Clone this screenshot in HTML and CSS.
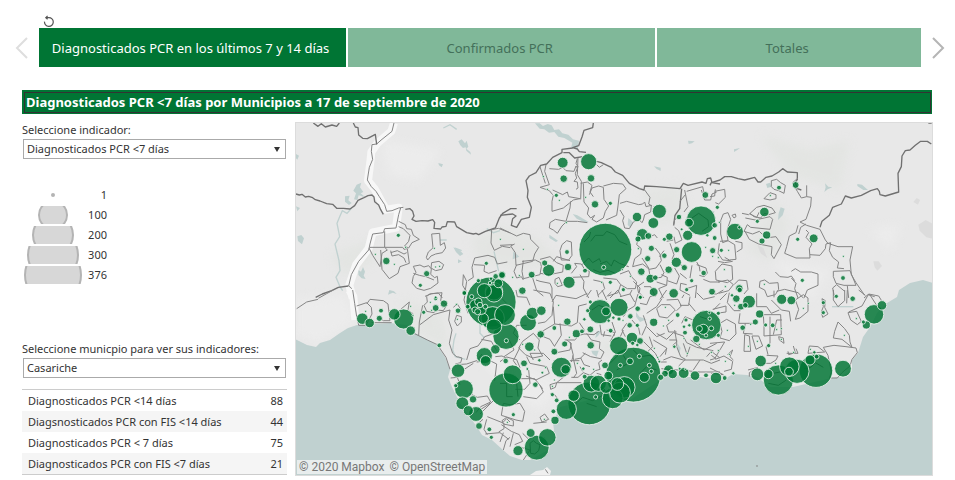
FILE: index.html
```html
<!DOCTYPE html>
<html lang="es">
<head>
<meta charset="utf-8">
<meta name="viewport" content="width=device-width, initial-scale=1">
<title>Diagnosticados PCR por Municipios</title>
<link rel="stylesheet" href="styles.css">
</head>
<body>
<header class="story">
  <button class="reset" type="button" aria-label="Restablecer">
    <svg viewBox="0 0 12 12" width="12" height="12"><path d="M3.500 2.600H5.800A4.400 4.400 0 1 1 1.500 6.600M4.600 .8 2.800 2.600 4.600 4.200"/></svg>
  </button>
  <nav class="story-nav">
    <button class="arrow arrow-prev" type="button" aria-label="Anterior">
      <svg viewBox="0 0 13 22" width="13" height="22"><path d="M12 1 2 11l10 10"/></svg>
    </button>
    <div class="tabs">
      <button class="tab tab-active" type="button">Diagnosticados PCR en los últimos 7 y 14 días</button>
      <button class="tab" type="button">Confirmados PCR</button>
      <button class="tab tab-last" type="button">Totales</button>
    </div>
    <button class="arrow" type="button" aria-label="Siguiente">
      <svg viewBox="0 0 13 22" width="13" height="22"><path d="m1 1 10 10L1 21"/></svg>
    </button>
  </nav>
</header>
<main class="board">
  <div class="title"><h1>Diagnosticados PCR &lt;7 días por Municipios a 17 de septiembre de 2020</h1></div>
  <div class="content">
    <aside class="panel">
      <div class="top">
        <label for="indicador">Seleccione indicador:</label>
        <div class="pick"><select id="indicador"><option>Diagnosticados PCR &lt;7 días</option></select></div>
        <ul class="legend">
          <li><svg viewBox="-29 -9 58 18"><circle r="2" class="dot"/></svg><span>1</span></li>
          <li><svg viewBox="-29 -9 58 18"><circle r="14"/></svg><span>100</span></li>
          <li><svg viewBox="-29 -9 58 18"><circle r="20"/></svg><span>200</span></li>
          <li><svg viewBox="-29 -9 58 18"><circle r="25"/></svg><span>300</span></li>
          <li><svg viewBox="-29 -9 58 18"><circle r="28"/></svg><span>376</span></li>
        </ul>
      </div>
      <div class="bottom">
        <label for="municipio">Seleccione municpio para ver sus indicadores:</label>
        <div class="pick"><select id="municipio"><option>Casariche</option></select></div>
        <table class="data">
          <tbody>
            <tr><th scope="row">Diagnosticados PCR &lt;14 días</th><td>88</td></tr>
            <tr><th scope="row">Diagsnosticados PCR con FIS &lt;14 días</th><td>44</td></tr>
            <tr><th scope="row">Diagnosticados PCR &lt; 7 días</th><td>75</td></tr>
            <tr><th scope="row">Diagnosticados PCR con FIS &lt;7 días</th><td>21</td></tr>
          </tbody>
        </table>
      </div>
    </aside>
    <section class="map">
      <svg viewBox="295 122 638 354" role="img" aria-label="Mapa de municipios">
        <rect class="land" x="295" y="122" width="638" height="354"/>
        <g class="relief">
          <path d="M470 240 500 225 540 240 560 262 520 270 480 262ZM640 190 680 185 690 215 660 225ZM745 250 775 200 790 225 770 262ZM400 300 440 310 450 350 420 335ZM590 345 640 330 660 350 620 360ZM760 135 810 150 850 140 840 190 790 175ZM330 255 370 240 375 262 345 275ZM660 330 700 340 720 365 680 360Z"/>
          <path class="relief-light" d="M296 300 345 295 356 322 318 344 296 336ZM520 365 560 385 540 410 515 395ZM480 360 505 355 500 380ZM380 140 440 150 420 180 390 175ZM870 230 900 225 890 250ZM770 260 830 270 810 300Z"/>
        </g>
        <path class="sea" d="M295 339 307 345 316 347 320 343 330 340 340 333 348 328 357 325 390 323 407 325 415 333 437 345 445 357 450 370 448 377 452 387 460 403 467 413 477 427 482 435 492 440 503 450 510 456 522 460 530 460 548 450 555 437 553 423 560 407 577 403 600 397 630 400 660 380 667 372 687 377 700 377 723 380 733 374 747 375 757 377 770 387 793 387 810 383 832 378 840 377 852 370 852 360 858 353 863 337 870 327 877 313 887 303 897 297 899 290 910 283 923 280 933 283V476H295Z"/>
        <path class="relief-light" d="M530 475 536 471 543 470 547 467 551 471 550 475Z"/>
        <g transform="translate(290 118) scale(.333333)">
          <path class="water" d="m505 70 10-6 10 12 5-8 5 18-6 6 12 10 2 8-14-12-2-10-8 2-8-8ZM200 200l14-6-4 14 10 14-8 4 14 12-20-6-4 14-10-2 6-18-8-8ZM165 235l14-2-4 14 10 8-8 6-12-10ZM205 455l8 6 6-14 6 14-4 12 6 10-12-2-10-10ZM22 355l12-4 8 10-6 18-12-10ZM18 108l9 5-5 12-4-4ZM18 265l12 5-8 10ZM490 388l16 6 14 14-10 6-12-12ZM504 424l12 6-12 6ZM445 135l14 4-4 9-8-6Z"/>
          <path class="river" d="m185 270-14 16-14-8-8 18-8 20 8 40-14 22 12 50 3 30-12 20 12 28 8 12M460 30l20-10 20 14M450 366h20M590 332l20 12 20-6M612 400l14 60M495 390l20 8"/>
          <path class="halo" d="m312 15-8 25-42 36-18 26-2 22-8 64 20 25 34 62 38-6-8 60-70 14-12 48-38 50-20 60 10 40"/>
          <path class="line" d="m312 15-6 25-30 24-16 14-14 2-2 20 4 24-10 24-6 38 12 20 14 14 10 16 16 24 6 20 16-2 20-8 14-2M332 270l-6 20-8 40-34 2-4 12-32 4-8 30-4 18-30 34-22 40-8 34 8 6 6 30"/>
          <path class="line dark" d="m70 15 14 10 10-8 12 10 20-6 14 4 8-10M190 15l6 12 8 2 2 22 12 10 14 1 24-13 4 30M18 228l10 3 8-2 10 8 10-2 12 4 8 6 14 4 20 8 18 2 12 12 20 0 20 2 14-10 10-16 18-8 12-6 12-2 6 6 2 14 12 10 6 14 8 14M346 274l14-2 8 8 4 14-6 10 12 6 18-2 18 1 14-4 6 8-2 18 20 2 4-6 12-2 4-14 22 1 6 14 30 18 20 4 8-2 8 4 20-10 30-10 12-30 10-14 24-14h18M175 504l-30 4-20 10-28 10-20 10"/>
          <path class="line" d="m326 310 20 10 4 12 14 2 6 18 18 12-22 10-10 16-12-6 12-14 4-18-20-20-14-6M284 340v48h54l4 6 10-2 6 44-28 10-6 20-26 16-22-28-4-58M240 388h44l8 8-16 10-6 40-22-34-10-20ZM302 404l20-6 20 10 8-4M302 398l4 16 20-4 16 10 6 14M425 348l24-2 2 36 12-8 4 16-10 14-20 4-14 6-10 12-4-8 6-16 14-12ZM370 445l20-4 12 6 14-4 8 10-2 16 12 10 8-4 2 20-22 16-20 6-22-6-14-16 4-20 8-12ZM370 466l18 6 20 4 24 10M425 434l22-4 14 10-6 14-18 4-14-8ZM605 335l20-4 36 14M605 335l-2 40 10 22 24-12 24 4M546 448l8-28 40-8 20 6 8 20 30-6M546 448l4 30-16 10M552 440l32 2-2 18 14 6 24-8M520 470l10 20-4 26-8-14ZM405 535l20-8 20-2 12 15"/>
        </g>
        <g transform="translate(500 118) scale(.333333)">
          <path class="water" d="m105 16 14 0 10 8 14-6 12 4 8 14 14-2 10 12 18 4 14 14 18 4-4 26-20-4 4-16-24-14-18-4-12-14-16 2-14-10-14-2ZM564 68l20 2-8 6-10 2ZM462 145l20 4v10l-12-6ZM218 288l14 4 34 20-10 2-26-12ZM385 300l14 12-8 18-8-10ZM148 350l26 18-6 4-20-12ZM40 400l18 16-20 8Z"/>
          <path class="line dark" d="m280 15-2 14-26 8-6 20-10 26-18 6 14 4 6 8 20 2M218 90l-32 4v10l-28 14-18 20-18 4-14 22-20 10-10 14 6 30-2 20 12 30-6 30-24 6-14 24-16-6 4-20 10-8-10-6-38 4M190 104l18 0 16 16 24-4M290 130l14 4 30 14 12 14 22 10 20 24 30 16 14 4 2-12 36 2 70 6 10-16 14 6 42-10 12 4 4-14 10-2 4 14 24 4M545 212l-6 60-14 20-4 30"/>
          <path class="line" d="m138 140-4 20 14 40-28 8 28 10 10 12M148 152l28 2 12-6 10 10 24 2 6-16 4 6M120 146l16 50M232 122l-4 14 6 10-8 20 4 14-8 10 10 2 2 18-6 4M234 120l-2 50 12 20-2 54M158 216l30 14 14-8 4 14 34 6-20 4-30 24-34 10v-30l4-18M212 250l-2 20-12 40-32-6-16 10-2 16 12 6 12 10 14-22 14-14h32l30 4M242 196l20-4 14 10-6 20 10 14M290 140l8 8 12-8M250 196l2 56 14 18-4 18 10 12 12-8-8 12 14 8 20-12 6-20 10-16-14-20-2-36-14-4-20 6-8 20M310 204l30-8 28 2 10 14-20 18-4 34-4 28-32 14M360 256l20-6 36 10 12-2 6-6 4 14 16-4-2 20-18 8-4 16-4 8-8-8-18 6-12 20-14-2-6-22 4-12-12-20M434 216l16 22-4 20 10 6M0 330l50 24 20-8 20 4 2 14 24 24-12 20-6 22-50 12-2-38-14-20 12-6M0 382l38-2M66 430l40-4 16 8 2 12-4 24-50 12-4-22 4-32M50 440l-8 20 8 20 14-4 6 10M120 424l30-8 20 18 20 8-2 20-40 8-28-4M160 430l10-14 40 12M186 380l14-12 14 4 2 40-10 14-22 0-4-28ZM165 484l12-6 10 24-14 4-8-10ZM108 486l12 4 30 6 6 14 0 30M98 480l12 38 20 16M240 470l12 20-2 20 16 30M214 466l16-20-6-10 20 2 10 16 14 6-2 16-50 2M280 486l28 6 6 20-20 20M310 480l40 4 12 16-8 24-30 10M360 468l26-10 10 20 14 14-4 20-24 0-20-12M398 446l6-24 18-14 2-16-14-12 6-24M426 420l20 30 4 24M398 446l30-8 20 16 20-4 16-22-4-20-14-18M432 492l-20 14 4 20M480 440l12 24-8 14-34 4M492 398l-14 18M400 490l20 20-2 14 14 16M470 492l30 10 2-24-18-8M500 502l-24 10 14 28M524 450l14 24-8 24-28-10M540 466l20 16M560 500l-18-4-2 20 30 16M542 440l18 12M576 442l-6 38M600 460l-2-14-8-14M590 440l28 10 4 16-10 10-14-4M520 322l4-16 10-10M524 328l12 10 10 28-20 10-4-20M500 370l20-4M472 360l-8-10-14 6M554 216l10 50-12 16M560 220l48-14 4 20M604 216l10 30 18 0 4-18 14-6M540 250l16-20M510 376l12 34-6 14M432 506l20 0 14 30M552 530l-6 10M560 512l30-10-4 38M610 484l20 8 30 0"/>
          <path class="line under" d="M252 372l16-16 4-14M272 370l14-18 24 0 10-12 24 10 14 20 24 10M246 440l20-20 12 14 20-12 4 10M300 438l20-8 14 14 8-18 16 10 28 10M280 455l20 8 24-6 20 8M576 300l20-14 28 20 2 20-20 14"/>
        </g>
        <g transform="translate(710 118) scale(.333333)">
          <path class="water" d="m72 94 18-4-8 6-10 6ZM168 198l12-4 4 12-12 4ZM345 196l10 10 12 2-14 6-10 8 4-14ZM442 198l14 2 18 16-14 0-18-12ZM212 268l12 4-6 20-14 14 2-20ZM0 280l14 0-6 10ZM172 490l28-8"/>
          <path class="urban" d="m625 320 22-14 22 12v44l-20-4-20-20ZM490 430l16 0 10 14-14 14-8-10ZM620 240l10 6-6 14-14-8ZM142 380l18 10 12 30-20-14Z"/>
          <path class="line dark" d="M0 202l4-8 26-8 14-10 20 0 20 6 20 4 30-8 10 14 8 0 16-14 18-4 20-12 12-10 14 10 30 2v20l-6 10 6 18 12 4M330 328l6-18 22-18 10-24 26-10 12-24 18 6 30-8 28-14 20-6 6 8 2 10 16 4 20-6 20-6-2-56 10-20 2-32 10-16 14-2 16-14 16-12 20 0 12 8M655 15h10"/>
          <path class="line" d="m290 202v34l14 2-2 26-14 40-18 8 20 10 40 12 16 32 8 10 30 10 44 0-8 40 4 44 14 24 26 38M248 194l16-14M248 196l14 24 12 20 16-4M184 188l16-4 12 10 14 8-4 24-16-8-14-4-8-8ZM162 242l18-18 18 6v12l-18 4ZM288 318l-16 10-6 20M264 322l-6 22-20 10-8 32-6 20 34 14 42 0-2-28 8-14-18-20 8-14-8-8M300 410l30 2 16-20 2-14 14-4-4 24 10 20 18 14-4 18 20 2M370 460l50-2 18 44-36 0-24-6-8-20ZM374 540l-6-30 12-10 24 20M412 504l4 36M462 540l12-10 20 6M244 460l12-8 16 10 32 0 20 6v34l-32 14-10 24M244 480l14 16-4 16 10 28M106 300l30 6 44-10 8 8-8 30-58-6-10-8-10 20 26 8 20-8 20 20 30-4 16 24-22 42-8-12 2-24-40-8-28-14-12-22M96 286l20 4 24-22 22-6 24 8 10 14-20 6-12-4-12 14-20-4-12-10M120 288l20 10 8-16M14 220l30-6 2 24-20 20-10-4M0 236l14-2 2-20M40 288l14-4 8 20-12 36 4 28-16 6-6-26 0-40ZM30 370l24-2 20 12 4 44-20 2-14-8M76 370l20 4 0 18-16 10M28 376l-4 30 14 20 24 2M24 430l20 4 24-4M16 460l20-22 30 6 2 40-16 10-34-8ZM24 492l30-6 16 14-14 18-30 8M66 292l10-4 2 8-6 4ZM72 500l14-14 24 2 4 26-12 14M150 490l14-4 14 10 26-2 2 20-10 16-24 6-8-20-16-8ZM196 462l14 14 24 2 10-4 10 14M200 520l24-6 40 10 16 16"/>
        </g>
        <g transform="translate(290 290) scale(.333333)">
          <path class="water" d="M298 0l14 4 8 8-12-4-14 6Z"/>
          <path class="river" d="m498 130-6 20-4 30 8 20 30 8M570 90v40l14 14"/>
          <path class="halo" d="m178 0 12 20 6 70"/>
          <path class="line" d="m188 0 6 40 6 40M85 25l25-14 20-11M20 56l30-20 34-8"/>
          <path class="line" d="m200 48 30-10 14 14 2 20-18 34-22 0-6-30M230 42l10-14 40 4 14 10 6 50-20 0-14-10M245 98l60 0M330 60l28-24-4 24 14 10 2 20M386 136l2-40 10-50M390 104l40-30 50-14-4 30 10 30-8 40 10 30 14 12M410 20l8-8 38-4-4 24 18 14-10 16-20-2-8 8-22-4-8-18 10-10ZM500 76l14 4 0 16-12 12-8-14ZM490 52l12-10 10 16M372 130l40 20 30 14 26 38 12 36M528 0l-6 30 12 40M482 264l20-2 8 22M502 200l14 4-4 14-16 4M500 224l30-2 30-10 16-20M530 210l10-34 24-8 20-28 30-10M560 216l40-4 20 10-6 50M616 200l20-2 16 8M520 240l30-20M538 310l24 12 30-4 10 18-30 14-14 18M600 340l-30 20M570 372l40-40M565 400l14-12M592 380l50 20 0 16-16 10M590 388l-8 30 10 16M586 432l44-4 26 20M640 480l8-28 12-10M574 148l30 6 16 28M640 396l10-10 10 10"/>
        </g>
        <g transform="translate(500 290) scale(.333333)">
          <path class="water" d="m290 124 14-2-10 16-8 6ZM274 182l22 0-6 18-12-8ZM408 66l10 14 22 8-20 8-12-16ZM532 160l10 14-4 16-6-12Z"/>
          <path class="line" d="m48 0 4 20 28 2 10 24M100 0l50 10 10 26-4 40-20 20-22 4M156 36l12-20 60 10 34-16M160 50l4 52-34 20-10 24M164 102l50 6 18-10 4-50 24-6M238 98l16 24M180 100l4 36-20 32M130 140l20 8 14 22M100 130l18 20-4 24 14 24-30 6-22-10-20-20 12-20ZM60 150l-20-20 10-24 30 0M80 200l10 20 50 10 8 20-40 20-30-12M100 210l-10-20 40 0 20 20M86 240l4 40-16 18-28 0M120 286l10 20-20 20-40-6M60 266l44 0 24 30M0 215l20-14 30 8 10 24M28 150l14 30-30 20M60 172l-20 40 10 14M194 150l30 0 14-14 14-4 30 2 14-10M200 150l14 10-4 20-50 10M210 156l10 40-6 20M260 130l14 20 26 6-2 20 14 10-10 20-30-6-24-12M270 230l-18-6-10-20 14-14M244 204l-20 4M218 196l12 54-10 14M214 262l20 0 16-14 20 8 16-14 14-4-4-20 10-8M190 262l-20 16 40 0 34 0M150 284l20-6-4 14-14 6ZM150 310l14 4 10 14M120 382l14-10 12 16-20 8ZM10 340l20 4 30-4 14 24-6 30-20-4-44-14ZM6 392l14-10 20 10 0 16-30-6ZM4 404l30 20 24 10 10 20-24 10M0 456l10-28M30 470l10-40M56 470l34 10-20 30M88 450l-20-20M160 370l14-12M100 400l40-4"/>
          <path class="line" d="m260 20 14-20M320 30l-14-30M330 24l24-24 10 20M336 96l10 30-16 30M300 104l4 30 30 4M310 140l4-16M370 80l14-20 20-12 10-36M380 100l-14 20 10 20M340 150l20-8 10-22M396 90l20 24 4 20M420 40l20 4 10-24 20-4M430 76l10 30-14 30M440 70l30-20 16-24M470 56l14-12 26 0 16 16-24 24-24-4ZM480 28l20-28M500 30l34-2 10 20-14 14M540 46l26 0 4-26M566 40l20 24M520 90l-20 16 6 20 24 0M440 110l30 30 24-10M448 140l10 30-20 20M426 150l40 40 14 26 20 0M460 150l40 24-4 20M470 130l30 18 20-20 30 10 10 20 30 14 50 10M508 150l22 0 0 20 12 30 14 8-20 20M490 210l24-10 36 10 60 0M524 120l6 36-12 10M550 160l10 30M560 200l10-30M572 150l40 30 38-20M620 200l14-16 26 20M634 196l14 10M610 210l24 10 26-10M484 236l50 4 66 6 60 0M480 200l20-24M580 240l20-30M290 250l14 4M320 120l24 8-2 10M210 212l28 0M240 230l8 14M590 8l20 20 34-8M640 60l20-20M545 100l10-20 24 10"/>
          <path class="line under" d="M330 220l20-20 14-20M350 240l34-20-14-24M400 180l20 20 30-4 14 10M420 250l20-20 30 10M0 280h20v40l18 0M30 270l20 10 4 40M228 340l20-18 30 10 30-16M260 340l30 10M276 60l20-14 24 8M90 460l10-8 10 8 10 4-4 18-12 10-12-2ZM600 80l30 10"/>
          <path class="line" d="m136 538 8 12M0 20l20 20M290 0l6 22M320 20l14-14M360 20l30-8 14 24M390 12l6-12"/>
        </g>
        <g transform="translate(710 290) scale(.333333)">
          <path class="river" d="M366 50h64"/>
          <path class="line" d="m0 12 20 0 20-12M30 100l20-12 26 14 2 30-20 20-28-8 6-20ZM18 70l30-4 0-18-40 10M58 8l-6 30 20 24 20 0M90 70l-4 30 44 0M106 100l-6 30 28 2M104 134l-2 50 20 0-4-46ZM126 138l20 0 12 30-20 10ZM140 10l0 40 30 0 14 20 24-10M160 74l52 0 2 60-52 4 0-30ZM180 80l0 60 0 20-12 10 6 24M190 134l10-44 16 0M206 140l14 4 2 16-14-10ZM192 2l0 20M184 30l30 30 24 4 4 30M256 30l24-16 14 10 0 40-24 20-14 4 10-30ZM336 26l10 6-2 20 10 20-16 10-4-16 6-16ZM370 0l0 30 14 20 20-18 0-32M412 0l-2 40M384 96l20 20 14 20 2 20 6 16-30-24-26-4 4-20ZM414 68l26-4 14 30-12 10-20-14ZM416 66l40-18 20-36 30 6 10 16M478 12l26 40M446 0l20 16M340 172l32-6 36 4 30 4 4 14-16 20-6 20-24 20-14 16-20 0M340 172l14 24 10 50-6 20M298 168l-4 22 50-4-20-16ZM250 168l6 20-20 6-2-10M230 190l34 0-6-14M170 196l34 2-6 12-16 10-22 0M114 240l30-8-26 16 0 12M0 160l44-4-30 50-14 4M16 208l26-10 26 16-4 24-22 6M52 194l16-14-8 20 10 10M0 234l40 20-36-4M30 30l20-20"/>
          <path class="line under" d="M282 236l20-4 14-14 24 14M175 280l30 6 24-16M190 250l20-4"/>
          <path class="line" d="M138 528h6"/>
        </g>
        <g id="cases" class="cases"></g>
        <rect class="frame" x="295.500" y="122.500" width="637" height="353"/>
      </svg>
      <p class="credits"><a href="#mapbox">© 2020 Mapbox</a><a href="#osm">© OpenStreetMap</a></p>
    </section>
  </div>
</main>
<script src="map.js"></script>
</body>
</html>
```
FILE: map.js
```js
// Case circles, grouped by map tile. Tile units are a third of a map unit: x, y, radius.
const tiles = [
  [290, 118, "325,352,5 347,388,2 256,409,2 289,429,10 313,439,2 433,391,2 631,364,2 589,436,5 410,467,8 449,445,2 437,447,2 391,502,5 523,525,6 437,538,3 603,552,74 636,471,10 625,496,12 617,475,7 583,518,20 603,482,4 565,488,5 600,495,4 612,520,25"],
  [500, 118, "188,134,15 266,131,23 191,182,10 273,181,10 130,176,2 142,214,2 169,232,5 178,247,2 257,238,2 285,259,10 331,256,5 199,314,2 70,394,2 201,402,6 134,435,8 146,457,17 95,470,9 6,471,9 38,478,2 58,473,2 67,518,10 204,447,10 207,493,17 255,458,6 172,496,2 316,395,78 311,448,5 367,455,2 305,493,2 331,493,5 370,515,5 421,537,5 391,475,2 411,297,13 478,280,20 460,315,15 427,349,16 414,363,8 445,354,9 415,392,2 454,391,8 443,422,8 493,413,7 493,364,5 508,356,10 530,395,8 537,297,7 567,314,12 603,308,43 563,352,14 545,334,3 575,402,30 529,433,14 553,449,8 506,455,10 424,461,10 451,482,12 466,479,7 461,522,12 521,526,13 560,515,5 575,488,5 611,465,7 616,231,9 622,352,4 617,388,2"],
  [710, 118, "22,268,5 14,322,7 14,360,6 75,341,24 88,328,4 28,313,2 207,209,6 181,233,2 257,201,9 163,282,13 142,310,5 170,351,11 156,369,8 263,364,5 311,361,12 400,415,2 399,480,6 277,487,5 8,398,8 34,397,5 56,397,2 8,415,2 25,419,2 43,455,2 46,506,2 6,521,9 88,511,10 163,499,2"],
  [290, 290, "227,64,2 217,86,16 239,99,13 273,62,6 268,85,8 313,73,16 341,87,29 362,49,2 362,122,13 369,76,2 401,67,5 421,37,2 437,26,5 425,61,2 437,54,9 462,41,10 448,166,6 499,43,2 504,62,7 502,88,2 523,9,6 583,197,23 587,213,15 616,178,13 647,213,7 504,242,19 522,297,27 497,287,5 517,340,18 549,328,10 535,362,14 558,372,21 567,408,9 598,418,6 604,442,5 652,397,2 648,300,50 648,139,38 649,152,5 608,85,34 645,75,30 580,85,14 555,45,15 565,35,10 575,60,12 545,20,5 612,10,25 533,50,6 570,45,7 555,60,8 563,65,8 586,50,6 612,110,22"],
  [500, 290, "124,62,13 97,70,17 84,98,24 122,133,10 163,114,6 176,46,2 202,95,10 194,162,8 208,142,2 229,131,11 246,124,6 271,118,9 253,88,4 263,62,5 271,36,5 300,65,35 318,64,12 357,52,26 326,92,4 340,83,4 357,87,5 369,91,2 389,106,7 391,79,7 413,56,7 421,22,5 412,106,5 332,122,6 88,170,13 68,163,2 104,180,2 163,185,9 72,220,9 82,237,3 118,211,4 127,248,3 137,233,2 106,284,7 38,253,27 184,232,29 197,238,13 272,166,10 232,220,2 250,236,4 281,238,2 315,226,9 254,260,6 163,270,2 157,289,2 157,314,5 170,331,6 160,364,6 165,391,11 133,388,2 40,374,5 92,429,12 142,442,25 110,473,36 54,482,14 461,97,11 496,52,2 533,75,6 490,108,2 506,91,2 558,90,5 568,106,4 555,128,6 552,110,4 552,145,2 619,105,43 610,118,14 589,147,10 598,116,8 629,86,4 628,68,3 634,115,6 618,136,4 523,170,4 562,190,2 598,163,2 463,175,2 356,167,26 396,144,16 420,153,9 398,160,5 412,165,4 400,254,81 390,214,9 361,226,5 418,199,5 448,226,5 454,244,5 433,262,14 268,340,63 199,358,29 221,317,16 274,281,24 295,280,23 325,257,12 318,292,17 352,282,18 373,292,31 338,325,30 360,308,30 287,321,5 495,251,9 506,240,14 518,252,13 551,249,15 585,257,13 618,256,6 648,264,16 478,215,3 473,202,2 482,262,8 539,236,3 556,238,2"],
  [710, 290, "4,187,2 25,182,2 58,193,2 46,214,2 70,250,4 44,264,6 52,121,2 25,70,5 25,136,5 98,113,7 79,26,10 66,16,4 89,0,7 74,46,2 93,50,9 106,46,7 117,35,18 149,72,11 136,96,8 122,103,2 167,105,5 188,106,6 214,116,2 200,119,2 214,148,2 176,167,5 142,154,2 115,169,2 215,28,14 244,31,12 280,55,2 295,40,2 340,38,5 340,68,5 379,19,5 428,26,7 439,86,2 403,136,2 516,46,13 492,73,28 469,105,11 460,96,5 251,187,2 301,178,2 313,187,4 152,213,16 197,220,2 142,253,18 175,252,13 205,270,44 238,230,28 261,244,35 237,245,12 318,242,49 300,210,14 320,200,6 399,236,24"]
];

const cases = tiles.flatMap(([left, top, list]) =>
  list.split(" ").map((item) => {
    const [x, y, r] = item.split(",").map(Number);
    return { x: left + x / 3, y: top + y / 3, r: r / 3 };
  })
);

// Large circles go underneath so the small ones stay visible.
cases.sort((a, b) => b.r - a.r);

const layer = document.getElementById("cases");
for (const { x, y, r } of cases) {
  const circle = document.createElementNS("http://www.w3.org/2000/svg", "circle");
  circle.setAttribute("cx", x);
  circle.setAttribute("cy", y);
  circle.setAttribute("r", r + 0.4);
  layer.append(circle);
}
```
FILE: styles.css
```css
* { box-sizing: border-box; }
body {
  margin: 0;
  background: #fff;
  color: #333;
  font: 11px/16px "Noto Sans", "Open Sans", sans-serif;
}
button, select { font: inherit; color: inherit; }
button { border: 0; padding: 0; background: none; cursor: pointer; }
svg { display: block; }

.story { padding: 13px 10px 0 15px; }
.reset { display: block; margin-left: 28px; height: 15px; }
.reset path { fill: none; stroke: #555; stroke-width: 1.2; }
.story-nav { display: flex; align-items: center; gap: 11px; }
.arrow path { fill: none; stroke: #b5b5b5; stroke-width: 2; }
.arrow-prev path { stroke: #dedede; }
.tabs { flex: 1; display: flex; gap: 2px; height: 39px; }
.tab {
  flex: 307 1 0;
  padding: 0 4px 0 0;
  background: #80b899;
  color: #44705a;
  font-size: 13px;
  white-space: nowrap;
}
.tab-last { flex-grow: 263; }
.tab-active { background: #007534; color: #fff; }

.board { padding: 23px 22px 4px; }
.title { margin-right: 1px; padding: 2px 1px 1px 2px; background: #007534; }
h1 {
  margin: 0;
  padding: 0 1px;
  border: 1px solid #333;
  color: #fff;
  font-size: 13px;
  line-height: 19px;
}
.content { display: grid; grid-template-columns: 265px 1fr; gap: 8px; margin-top: 8px; }
.panel { display: flex; flex-direction: column; justify-content: space-between; padding-bottom: 1px; }
label { display: block; }
.pick { position: relative; margin: 1px 1px 0; }
.pick::after {
  content: "";
  position: absolute;
  right: 6px;
  top: 8px;
  border: 3px solid transparent;
  border-top: 5px solid #333;
  border-bottom: 0;
  pointer-events: none;
}
select {
  display: block;
  width: 100%;
  height: 20px;
  padding: 0 3px;
  border: 1px solid #aaa;
  border-radius: 0;
  background: #fff;
  appearance: none;
}
.legend { margin: 27px 0 0 2px; padding: 0; list-style: none; display: grid; gap: 2px; }
.legend li { display: flex; align-items: center; height: 18px; }
.legend svg { width: 58px; height: 18px; overflow: hidden; }
.legend circle { fill: #d7d7d7; stroke: #b4b4b4; stroke-width: 2; }
.legend .dot { fill: #b4b4b4; stroke: none; }
.legend span { width: 25px; text-align: right; }
.data {
  width: 100%;
  margin-top: 11px;
  border-collapse: separate;
  border-spacing: 0;
  border: solid #ccc;
  border-width: 1px 0;
}
.data th, .data td { height: 21px; padding: 0 4px 0 6px; font-weight: 400; text-align: left; }
.data td { text-align: right; }
.data tr:nth-child(even) { background: #f5f5f5; }

.map { position: relative; }
.map > svg { width: 100%; }
.land { fill: #e8e8e8; }
.relief { fill: #e0e3df; opacity: .6; filter: blur(5px); }
.relief-light { fill: #efefef; }
.sea { fill: #c0d1d0; }
.water { fill: #c0d1d0; }
.urban { fill: #dcdcdc; }
.river { fill: none; stroke: #c0d1d0; stroke-width: 4; }
.halo { fill: none; stroke: #f7f7f7; stroke-width: 24; stroke-linejoin: round; }
.line { fill: none; stroke: #858585; stroke-width: 3; stroke-linejoin: round; }
.dark { stroke: #707070; stroke-width: 4; }
.under { stroke: #666; }
.cases circle { fill: #007534; fill-opacity: .83; stroke: #f0f5f1; stroke-width: .8; }
.frame { fill: none; stroke: #dcdcdc; }
.credits {
  position: absolute;
  left: 2px;
  bottom: 2px;
  display: flex;
  gap: 5px;
  margin: 0;
  padding: 0 2px;
  background: #e8eded;
  font: 12px/14px Roboto, sans-serif;
}
.credits a { color: #777; text-decoration: none; }
```
